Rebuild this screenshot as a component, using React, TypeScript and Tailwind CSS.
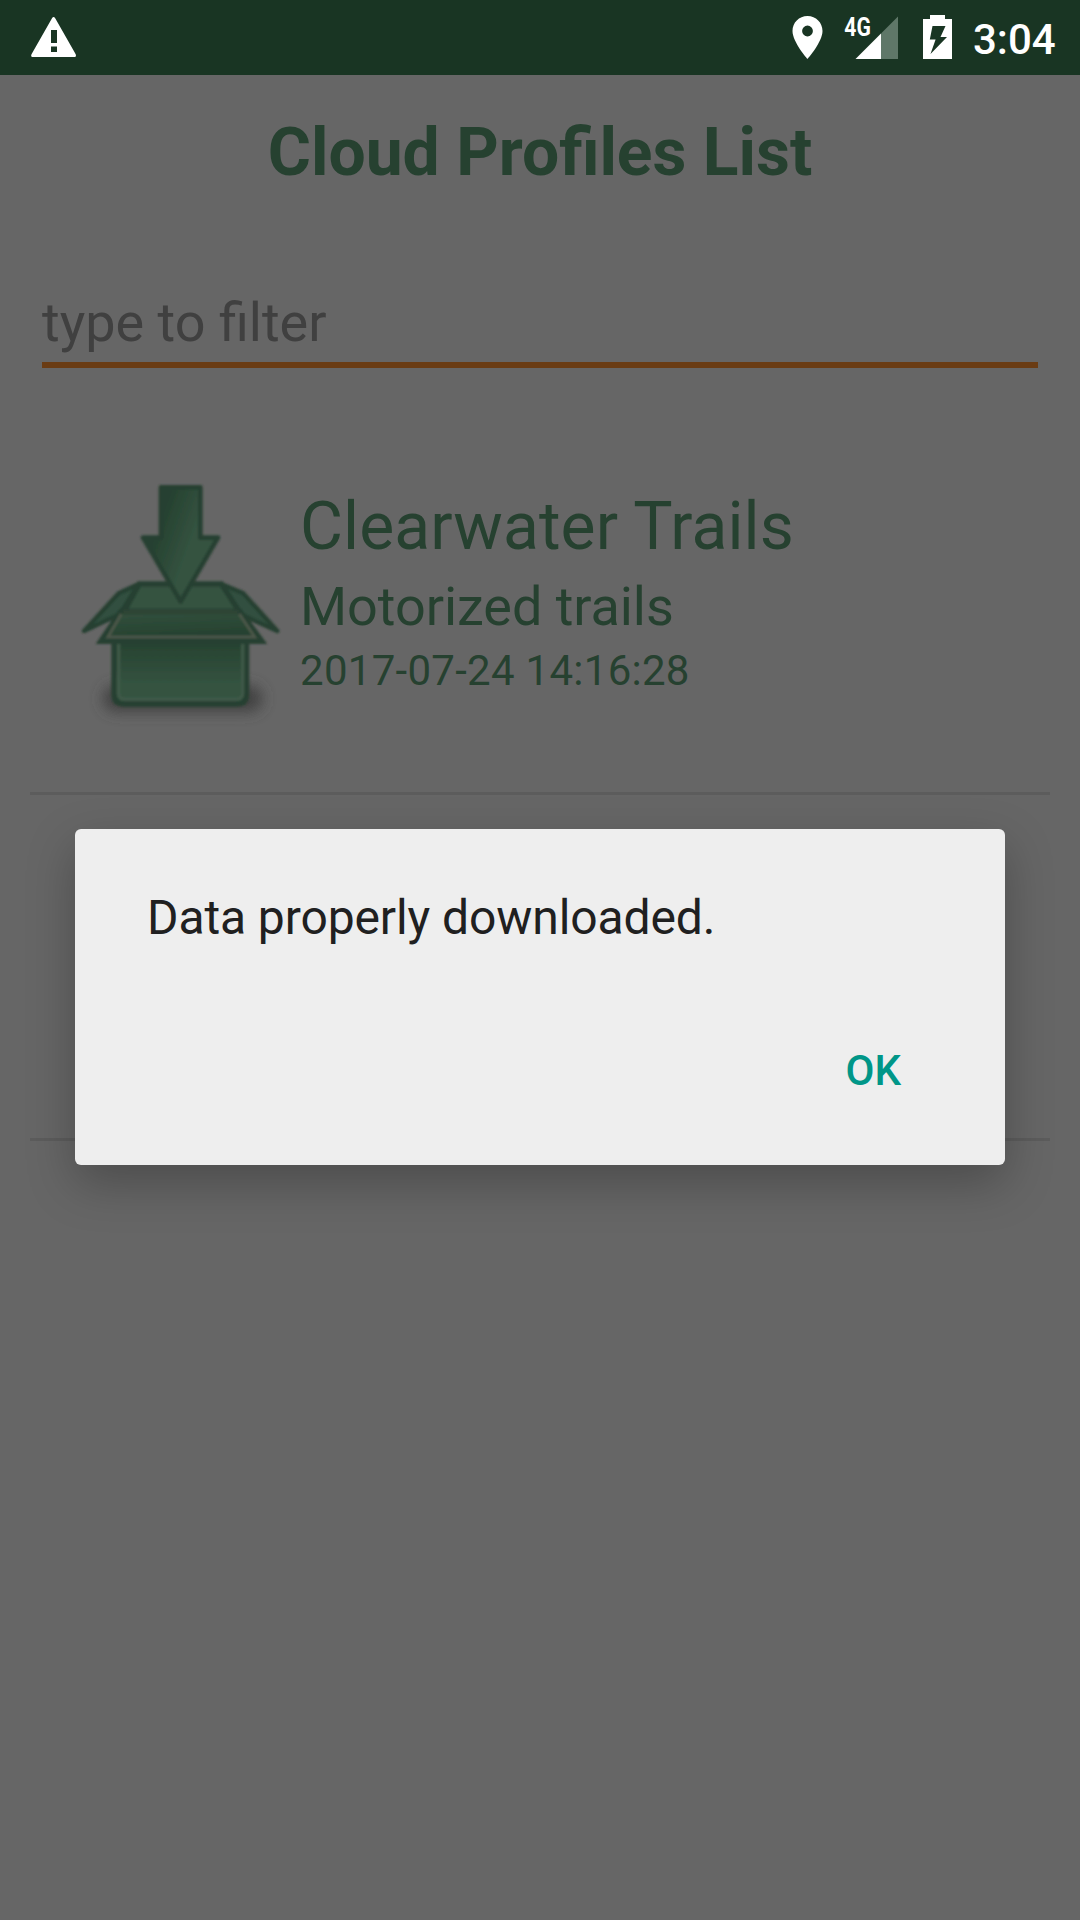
function StatusBar() {
  return (
    <header className="flex h-[75px] items-center bg-[#193523] text-white">
      <svg className="h-[75px] w-[100px]" viewBox="0 0 100 75">
        <path
          fillRule="evenodd"
          fill="#fff"
          d="M52 18.2Q53.600 15.800 55.200 18.200L75.700 54.200Q76.700 57 74.200 57H33Q30.300 57 31.500 54.200ZM51 30V43H57V30ZM51 46.500V52H57V46.500Z"
        />
      </svg>
      <div className="ml-auto flex items-center">
        <svg className="h-[75px] w-[54px]" viewBox="780 0 54 75">
          <path
            fillRule="evenodd"
            fill="#fff"
            d="M807.500 16C799 16 792.500 22.700 792.500 31C792.500 42 807.500 59 807.500 59S822.500 42 822.500 31C822.500 22.700 816 16 807.500 16ZM807.500 25.600A5.400 5.400 0 1 1 807.500 36.400A5.400 5.400 0 1 1 807.500 25.600Z"
          />
        </svg>
        <svg className="h-[75px] w-[76px]" viewBox="834 0 76 75">
          <path fill="#5f7768" d="M881 33.500L898 16.500V59H881Z" />
          <path fill="#fff" d="M881 33.500V59H855.500Z" />
          <text
            x="844.300"
            y="35.500"
            fill="#fff"
            fontFamily="Roboto"
            fontWeight="700"
            fontSize="25.500"
            textLength="26.500"
            lengthAdjust="spacingAndGlyphs"
          >
            4G
          </text>
        </svg>
        <svg className="h-[75px] w-[62px]" viewBox="910 0 62 75">
          <path
            fillRule="evenodd"
            fill="#fff"
            d="M930 15H945V19H952V59H923V19H930ZM932.500 26L929.800 39.500H935.600L930.500 54L947 37H940.500L945.500 26Z"
          />
        </svg>
        <span className="mt-[4px] mr-[23px] ml-px w-[84px] text-[42px] leading-[50px] font-medium">3:04</span>
      </div>
    </header>
  );
}

function DownloadBoxIcon() {
  return (
    <svg className="mt-[21px] h-[260px] w-[240px] shrink-0" viewBox="0 0 720 780">
      <defs>
        <linearGradient id="arrow" x1="0" y1="0" x2="1" y2="0.550">
          <stop offset="0.300" stopColor="#264130" />
          <stop offset="0.700" stopColor="#345340" />
        </linearGradient>
        <linearGradient id="body" x1="0" y1="0" x2="0" y2="1">
          <stop offset="0.050" stopColor="#264130" />
          <stop offset="0.700" stopColor="#345340" />
        </linearGradient>
        <linearGradient id="flap" x1="0" y1="0" x2="0.200" y2="1">
          <stop offset="0.200" stopColor="#304e3b" />
          <stop offset="0.900" stopColor="#264130" />
        </linearGradient>
        <filter id="shade" x="-20%" y="-60%" width="140%" height="220%">
          <feGaussianBlur stdDeviation="20" />
        </filter>
        <filter id="soft" x="-5%" y="-5%" width="110%" height="110%">
          <feGaussianBlur stdDeviation="2.500" />
        </filter>
      </defs>
      <rect x="128" y="646" width="480" height="80" rx="40" fill="#434343" filter="url(#shade)" />
      <g filter="url(#soft)">
        <path
          d="M162 500H560V672Q560 702 530 702H192Q162 702 162 672Z"
          fill="url(#body)"
          stroke="#264130"
          strokeWidth="16"
        />
        <path
          d="M176 520V668Q176 688 196 688H528Q548 688 548 668V520"
          fill="none"
          stroke="#3f5a48"
          strokeWidth="9"
        />
        <path
          d="M236 342L176 370L72 483L180 432ZM484 342L550 370L652 483L540 432Z"
          fill="#315040"
          stroke="#264130"
          strokeWidth="13"
          strokeLinejoin="round"
        />
        <path d="M238 342H484L540 428H190Z" fill="#345340" stroke="#264130" strokeWidth="16" />
        <path d="M182 424H540L606 514H122Z" fill="url(#flap)" stroke="#264130" strokeWidth="16" />
        <path d="M184 432L144 501H584L538 432" fill="none" stroke="#4b5748" strokeWidth="9" />
        <path d="M190 426H534" stroke="#2d4434" strokeWidth="14" />
        <path
          d="M303 52H421V203H474L362 395L249 203H303Z"
          fill="url(#arrow)"
          stroke="#264130"
          strokeWidth="14"
          strokeLinejoin="round"
        />
      </g>
    </svg>
  );
}

export default function App() {
  return (
    <div className="relative flex h-[1920px] w-[1080px] flex-col overflow-hidden bg-[#666666] font-['Roboto',sans-serif]">
      <StatusBar />
      <h1 className="text-center text-[66px] leading-[155px] font-bold text-[#264130]">
        Cloud Profiles List
      </h1>
      <div className="mx-[42px] mt-[53px] h-[85px] border-b-6 border-[#6a3c14] text-[54px] leading-[79px] text-[#404040]">
        type to filter
      </div>
      <ul className="mx-[30px] mt-[81px]">
        <li className="flex h-[346px] items-start border-b-3 border-[#5c5c5c] pl-[30px]">
          <DownloadBoxIcon />
          <div className="pt-[36px] text-[#264130]">
            <p className="text-[66px] leading-[84px] tracking-[0.08px]">Clearwater Trails</p>
            <p className="text-[54px] leading-[76px] tracking-[-0.05px]">Motorized trails</p>
            <p className="text-[42px] leading-[52px] tracking-[0.28px]">2017-07-24 14:16:28</p>
          </div>
        </li>
        <li className="h-[346px] border-b-3 border-[#5c5c5c]" />
      </ul>
      <div
        role="dialog"
        className="absolute top-[829px] left-[75px] flex h-[336px] w-[930px] flex-col rounded-[6px] bg-[#eeeeee] px-[72px] pt-[59px] shadow-[0_18px_48px_rgba(0,0,0,0.26)]"
      >
        <p className="text-[48px] leading-[60px] tracking-[-0.1px] text-[#202020]">
          Data properly downloaded.
        </p>
        <button className="mt-[93px] mr-[32px] self-end text-[42px] leading-[60px] font-medium text-[#009688]">
          OK
        </button>
      </div>
    </div>
  );
}
